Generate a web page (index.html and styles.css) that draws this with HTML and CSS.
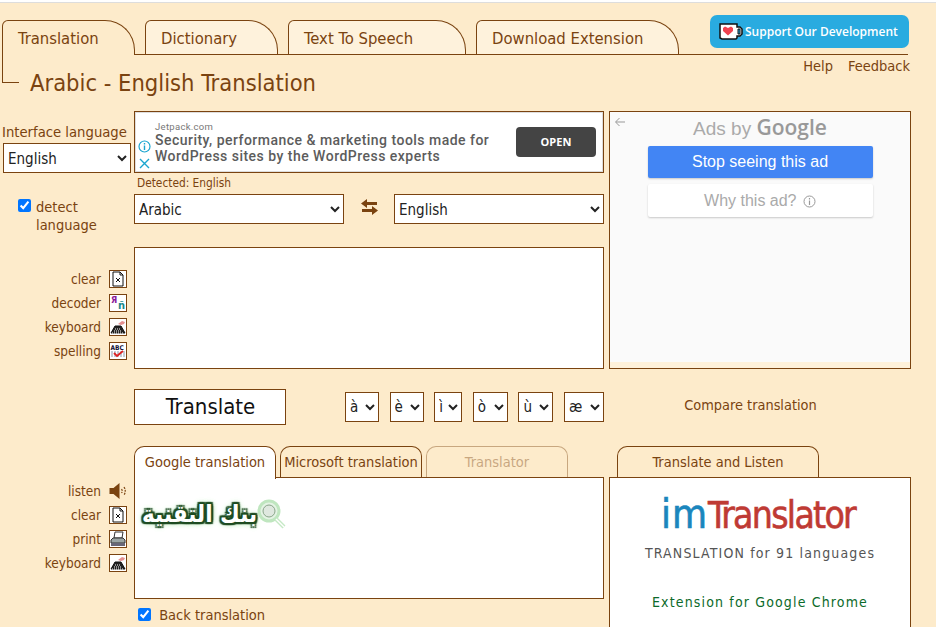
FILE: index.html
```html
<!DOCTYPE html>
<html lang="en">
<head>
    <meta charset="UTF-8">
    <title>Arabic - English Translation</title>
    <link rel="stylesheet" href="styles.css">
</head>
<body>
    <div class="header">
        <div class="tabs">
            <div class="tab tab-main">Translation</div>
            <div class="tab tab-dict">Dictionary</div>
            <div class="tab tab-tts">Text To Speech</div>
            <div class="tab tab-ext">Download Extension</div>
            <a class="support">
                <svg width="24" height="17" viewBox="0 0 24 17">
                    <path d="M1 1h17v3h3l2 2v5l-2 2h-3v2l-1 1H3l-2-1z" fill="#fff" stroke="#111" stroke-width="1.500"/>
                    <path d="M4 5l2-1.500 3 1.500 3-1.500 2 1.500v3l-5 4.500-5-4.500z" fill="#f0424f"/>
                    <path d="M19 6h2v5h-2z" fill="#29abe0" stroke="#111"/>
                </svg>
                Support Our Development
            </a>
        </div>
        <div class="subhead">
            <h1>Arabic - English Translation</h1>
            <div class="links"><span>Help</span><span>Feedback</span></div>
        </div>
    </div>

    <div class="row row-input">
        <div class="side">
            <label class="iface-label">Interface language</label>
            <select class="iface-select"><option>English</option></select>
            <div class="detect">
                <input type="checkbox" checked>
                <span>detect<br>language</span>
            </div>
            <ul class="tools tools-input">
                <li>clear
                    <svg class="ico" viewBox="0 0 16 16"><path d="M3 1h7l3 3v11H3z" fill="#fff" stroke="#111"/><path d="M10 1v3h3" fill="none" stroke="#111"/><path d="M6 7l4 4M10 7l-4 4" stroke="#111"/></svg>
                </li>
                <li>decoder
                    <svg class="ico" viewBox="0 0 16 16"><text x="1" y="8" class="ico-a">Я</text><text x="8" y="14" class="ico-b">ñ</text></svg>
                </li>
                <li>keyboard
                    <svg class="ico" viewBox="0 0 16 16"><path d="M1 14l4-7h6l4 7z" fill="#222" stroke="#111"/><path d="M4 12h8M5 10h6M2 14h12" stroke="#fff" stroke-dasharray="1 1"/><path d="M8 5l4-3 3 1-1 2-3 1z" fill="#e58f8f"/></svg>
                </li>
                <li>spelling
                    <svg class="ico" viewBox="0 0 16 16"><text x="0.500" y="7" class="ico-abc">ABC</text><path d="M1 9h14M1 11h14M1 13h14" stroke="#89a" stroke-dasharray="2 1"/><path d="M4 10l3 3 6-5" fill="none" stroke="#d22" stroke-width="1.800"/></svg>
                </li>
            </ul>
        </div>

        <div class="middle">
            <div class="jetpack">
                <div class="jetpack-marks">
                    <svg width="13" height="13" viewBox="0 0 13 13"><circle cx="6.500" cy="6.500" r="5.500" fill="none" stroke="#1aa5cf" stroke-width="1.200"/><path d="M6.500 3v1.500M6.500 5.500V10" stroke="#1aa5cf" stroke-width="1.400"/></svg>
                    <svg width="13" height="13" viewBox="0 0 13 13"><path d="M2 2l9 9M11 2l-9 9" stroke="#1aa5cf" stroke-width="1.400"/></svg>
                </div>
                <div class="jetpack-copy">
                    <small>Jetpack.com</small>
                    <p>Security, performance &amp; marketing tools made for WordPress sites by the WordPress experts</p>
                </div>
                <span class="jetpack-open">OPEN</span>
            </div>
            <div class="detected">Detected: English</div>
            <div class="lang-pair">
                <select class="lang"><option>Arabic</option></select>
                <svg class="swap" width="17" height="16" viewBox="0 0 17 16"><path d="M6 0L0 4.500 6 9V6h10V3H6zM11 7l6 4.500-6 4.500v-3H1v-3h10z" fill="#7a4310"/></svg>
                <select class="lang"><option>English</option></select>
            </div>
            <textarea class="source"></textarea>
        </div>

        <div class="adchoice">
            <div class="adchoice-body">
                <svg class="adback" width="12" height="10" viewBox="0 0 12 10"><path d="M11 5H2M5.500 1L1.500 5l4 4" fill="none" stroke="#999" stroke-width="1"/></svg>
                <div class="adsby">Ads by <b>Google</b></div>
                <div class="ad-btn ad-stop">Stop seeing this ad</div>
                <div class="ad-btn ad-why">Why this ad?
                    <svg width="13" height="13" viewBox="0 0 13 13"><circle cx="6.500" cy="6.500" r="5.500" fill="none" stroke="#999"/><path d="M6.500 3v1.500M6.500 5.500V10" stroke="#999" stroke-width="1.200"/></svg>
                </div>
            </div>
        </div>
    </div>

    <div class="row row-actions">
        <div class="side"></div>
        <div class="actions-mid">
            <button class="translate">Translate</button>
            <div class="chars">
                <select class="char"><option>à</option></select>
                <select class="char"><option>è</option></select>
                <select class="char char-i"><option>ì</option></select>
                <select class="char char-wide"><option>ò</option></select>
                <select class="char char-wide"><option>ù</option></select>
                <select class="char char-ae"><option>æ</option></select>
            </div>
        </div>
        <div class="compare">Compare translation</div>
    </div>

    <div class="row row-output">
        <div class="side">
            <ul class="tools tools-output">
                <li>listen
                    <svg class="ico-plain" viewBox="0 0 17 18"><path d="M0 6h4l6-5v16l-6-5H0z" fill="#7a4310"/><path d="M12 7q1.500 2 0 4M14.500 5q2.500 4 0 8" fill="none" stroke="#7a4310" stroke-width="1.200" stroke-dasharray="2 1"/></svg>
                </li>
                <li>clear
                    <svg class="ico" viewBox="0 0 16 16"><path d="M3 1h7l3 3v11H3z" fill="#fff" stroke="#111"/><path d="M10 1v3h3" fill="none" stroke="#111"/><path d="M6 7l4 4M10 7l-4 4" stroke="#111"/></svg>
                </li>
                <li>print
                    <svg class="ico" viewBox="0 0 16 16"><path d="M5 1h8l-1 6H4z" fill="#fff" stroke="#333"/><path d="M1 9l2-2h10l2 2v3H1z" fill="#9aa5a5" stroke="#333"/><path d="M1 12h14v3H1z" fill="#667"/></svg>
                </li>
                <li>keyboard
                    <svg class="ico" viewBox="0 0 16 16"><path d="M1 14l4-7h6l4 7z" fill="#222" stroke="#111"/><path d="M4 12h8M5 10h6M2 14h12" stroke="#fff" stroke-dasharray="1 1"/><path d="M8 5l4-3 3 1-1 2-3 1z" fill="#e58f8f"/></svg>
                </li>
            </ul>
        </div>
        <div class="middle">
            <div class="subtabs">
                <div class="subtab subtab-on">Google translation</div>
                <div class="subtab">Microsoft translation</div>
                <div class="subtab subtab-off">Translator</div>
            </div>
            <div class="output">
                <div class="brand">
                    <span class="brand-text" dir="rtl" lang="ar">بنك التقنية</span>
                    <svg width="30" height="32" viewBox="0 0 30 32"><circle cx="12" cy="13" r="10" fill="#e4f3e4" stroke="#bfe6bf" stroke-width="3"/><circle cx="12" cy="13" r="6" fill="#dfe8df" stroke="#8aa58a"/><path d="M19 21l8 8" stroke="#c5e8c5" stroke-width="4"/><path d="M19 21l8 8" stroke="#fff" stroke-width="1.500"/></svg>
                </div>
            </div>
            <label class="back"><input type="checkbox" checked> Back translation</label>
        </div>
        <div class="promo-col">
            <div class="subtabs subtabs-promo">
                <div class="subtab subtab-listen">Translate and Listen</div>
            </div>
            <div class="promo">
                <div class="logo"><span class="logo-im">im</span><span class="logo-tr">Translator</span></div>
                <div class="promo-line">TRANSLATION for 91 languages</div>
                <div class="promo-ext">Extension for Google Chrome</div>
            </div>
        </div>
    </div>
</body>
</html>
```

FILE: styles.css
```css
html {
    background: #fff;
}

body {
    font-family: "DejaVu Sans Condensed", "DejaVu Sans", sans-serif;
    font-size: 14px;
    background-color: #fdebcb;
    color: #7a4310;
    margin: 2px 0 0;
    padding: 0;
    height: 625px;
    overflow: hidden;
    border-top: 1px solid #ddd;
    box-sizing: border-box;
}

select {
    font-family: "DejaVu Sans Condensed", "DejaVu Sans", sans-serif;
    font-size: 15px;
    color: #222;
    background: #fff;
    border: 1px solid #7a4310;
    border-radius: 0;
    box-sizing: border-box;
}

/* top tabs */
.header {
    padding-left: 2px;
}

.tabs {
    display: flex;
    align-items: flex-end;
    height: 51px;
    width: 906px;
    border-bottom: 1px solid #7a4310;
    position: relative;
}

.tab {
    height: 34px;
    box-sizing: border-box;
    border: 1px solid #7a4310;
    border-bottom: none;
    border-radius: 6px 30px 0 0;
    background: #fef2dc;
    font-size: 16.500px;
    line-height: 36px;
    padding-left: 15px;
    margin-right: 10px;
}

.tab-main {
    width: 133px;
    height: 35px;
    background: #fdebcb;
    margin-bottom: -1px;
}

.tab-dict {
    width: 133px;
}

.tab-tts {
    width: 178px;
}

.tab-ext {
    width: 203px;
}

.support {
    position: absolute;
    left: 708px;
    top: 12px;
    width: 199px;
    height: 33px;
    box-sizing: border-box;
    background: #29abe0;
    border-radius: 7px;
    color: #fff;
    font-family: "Open Sans", sans-serif;
    font-weight: 600;
    font-size: 12px;
    display: flex;
    align-items: center;
    padding-left: 9px;
    gap: 2px;
    white-space: nowrap;
}

.subhead {
    display: flex;
    justify-content: space-between;
    width: 908px;
    height: 56px;
}

h1 {
    margin: 0;
    font-weight: normal;
    font-size: 23.500px;
    height: 28px;
    line-height: 28px;
    margin-top: 14px;
    padding-left: 28px;
    position: relative;
}

/* tail of the main tab outline */
h1::before {
    content: "";
    position: absolute;
    left: 0;
    top: -14px;
    width: 16px;
    height: 27px;
    border-left: 1px solid #7a4310;
    border-bottom: 1px solid #7a4310;
}

.links {
    display: flex;
    gap: 15px;
    padding-top: 3px;
    font-size: 14.500px;
}

/* rows */
.row {
    display: flex;
}

.side {
    width: 134px;
    flex: none;
}

.middle {
    width: 470px;
    flex: none;
}

.row-input {
    height: 258px;
}

.iface-label {
    display: block;
    padding: 12px 0 0 2px;
    height: 20px;
    font-size: 14.700px;
    white-space: nowrap;
}

.iface-select {
    display: block;
    width: 128px;
    height: 30px;
    margin-left: 3px;
    padding: 2px 0 0;
}

.detect {
    display: flex;
    margin: 18px 0 0 18px;
    font-size: 14.500px;
    line-height: 18px;
    height: 44px;
}

.detect input {
    margin: 8px 5px 0 0;
    width: 13px;
    height: 13px;
}

.detect span {
    padding-top: 7px;
}

.tools {
    list-style: none;
    margin: 0;
    padding: 0 7px 0 0;
    font-size: 13.500px;
}

.tools li {
    display: flex;
    align-items: center;
    justify-content: flex-end;
    gap: 8px;
    height: 24px;
}

.tools-input {
    margin-top: 32px;
}

.ico {
    width: 16px;
    height: 16px;
    background: #fff;
    border: 1px solid #7a4310;
}

.ico-plain {
    width: 18px;
    height: 18px;
}

.ico-a {
    font-size: 9px;
    font-weight: bold;
    fill: #8a1a9a;
}

.ico-b {
    font-size: 11px;
    font-weight: bold;
    fill: #1a8a8a;
}

.ico-abc {
    font-size: 6.500px;
    font-weight: bold;
    fill: #113;
}

.jetpack {
    height: 62px;
    box-sizing: border-box;
    border: 1px solid #7a4310;
    background: #fff;
    box-shadow: inset 0 0 0 1px #ddd;
    display: flex;
    align-items: center;
    color: #5c5c5c;
    position: relative;
}

.jetpack-marks {
    display: flex;
    flex-direction: column;
    gap: 4px;
    margin: 25px 0 0 3px;
    width: 17px;
    flex: none;
}

.jetpack-copy {
    width: 342px;
    flex: none;
}

.jetpack-copy small {
    display: block;
    font-family: Roboto, sans-serif;
    font-size: 9.500px;
    letter-spacing: 0.3px;
    color: #777;
    line-height: 11px;
}

.jetpack-copy p {
    margin: 0;
    font-family: Roboto, sans-serif;
    font-size: 14px;
    font-weight: 500;
    letter-spacing: 0.48px;
    line-height: 16px;
}

.jetpack-open {
    margin-left: 19px;
    width: 80px;
    height: 30px;
    background: #444;
    border-radius: 4px;
    color: #fff;
    font: bold 11px/30px "Open Sans", sans-serif;
    text-align: center;
}

.detected {
    font-size: 11.800px;
    height: 21px;
    line-height: 21px;
    padding-left: 3px;
}

.lang-pair {
    display: flex;
    align-items: center;
    justify-content: space-between;
    height: 30px;
}

.lang {
    width: 210px;
    height: 30px;
    padding: 2px 0 0;
}

.swap {
    margin-top: -4px;
}

.source {
    display: block;
    width: 100%;
    height: 122px;
    margin: 23px 0 0;
    padding: 2px;
    border: 1px solid #7a4310;
    box-sizing: border-box;
    background: #fff;
    resize: none;
}

/* ad panel */
.adchoice {
    margin-left: 5px;
    width: 302px;
    height: 258px;
    box-sizing: border-box;
    border: 1px solid #7a4310;
    background: #fef1da;
    padding-bottom: 6px;
}

.adchoice-body {
    height: 100%;
    background: #fafafa;
    position: relative;
    display: flex;
    flex-direction: column;
    align-items: center;
}

.adback {
    position: absolute;
    left: 4px;
    top: 5px;
}

.adsby {
    font-family: "Liberation Sans", sans-serif;
    font-size: 19px;
    color: #aaa;
    height: 34px;
    line-height: 31px;
}

.adsby b {
    font-family: "Open Sans", sans-serif;
    font-size: 21px;
    font-weight: 600;
    color: #999;
}

.ad-btn {
    width: 225px;
    box-sizing: border-box;
    border-radius: 2px;
    font-family: "Liberation Sans", sans-serif;
    font-size: 16px;
    text-align: center;
    box-shadow: 0 1px 2px rgba(0, 0, 0, 0.2);
}

.ad-stop {
    height: 32px;
    line-height: 32px;
    background: #4285f4;
    color: #fff;
}

.ad-why {
    height: 33px;
    line-height: 33px;
    margin-top: 6px;
    background: #fff;
    color: #aaa;
}

.ad-why svg {
    vertical-align: -2px;
    margin-left: 2px;
}

/* translate row */
.row-actions {
    height: 36px;
    margin-top: 20px;
}

.actions-mid {
    width: 470px;
    flex: none;
    display: flex;
    align-items: center;
    justify-content: space-between;
}

.translate {
    width: 152px;
    height: 36px;
    background: #fff;
    border: 1px solid #7a4310;
    color: #111;
    font-family: "DejaVu Sans Condensed", "DejaVu Sans", sans-serif;
    font-size: 22px;
    padding: 0 0 2px 1px;
}

.chars {
    display: flex;
    justify-content: space-between;
    width: 259px;
}

.char {
    width: 34px;
    height: 30px;
    padding: 0;
}

.char-i {
    width: 28px;
}

.char-wide {
    width: 35px;
}

.char-ae {
    width: 40px;
}

.compare {
    width: 283px;
    margin-left: 5px;
    text-align: center;
    line-height: 32px;
    font-size: 14.400px;
}

/* output row */
.row-output {
    margin-top: 21px;
}

.tools-output {
    margin-top: 33px;
}

.subtabs {
    display: flex;
    gap: 4px;
    height: 31px;
    position: relative;
}

.subtab {
    width: 142px;
    height: 32px;
    box-sizing: border-box;
    border: 1px solid #7a4310;
    border-bottom: none;
    border-radius: 10px 10px 0 0;
    text-align: center;
    line-height: 31px;
    font-size: 14.500px;
    white-space: nowrap;
}

.subtab-on {
    background: #fff;
    height: 33px;
    position: relative;
    z-index: 1;
}

.subtab-off {
    opacity: 0.4;
}

.subtab-listen {
    width: 202px;
    margin-left: 8px;
}

.output {
    height: 122px;
    box-sizing: border-box;
    border: 1px solid #7a4310;
    background: #fff;
    padding: 20px 0 0 7px;
}

.brand {
    display: flex;
    align-items: center;
}

.brand-text {
    font-family: "DejaVu Sans Condensed", "DejaVu Sans", sans-serif;
    font-weight: bold;
    font-size: 24px;
    line-height: 32px;
    color: #fff;
    white-space: nowrap;
    text-shadow: 2px 0 1px #1f4d23, -2px 0 1px #1f4d23, 0 2px 1px #1f4d23, 0 -2px 1px #1f4d23,
        2px 2px 1px #1f4d23, -2px 2px 1px #1f4d23, 2px -2px 1px #1f4d23, -2px -2px 1px #1f4d23,
        0 0 6px #a9e0a9, 0 0 6px #a9e0a9;
}

.back {
    display: block;
    margin: 8px 0 0 4px;
    font-size: 14.500px;
    white-space: nowrap;
}

.back input {
    margin: 0 4px 0 0;
    vertical-align: -1px;
}

.promo-col {
    margin-left: 5px;
    width: 302px;
}

.promo {
    height: 150px;
    box-sizing: border-box;
    border: 1px solid #7a4310;
    border-bottom: none;
    background: #fff;
    text-align: center;
    letter-spacing: 1.150px;
    font-size: 14px;
}

.logo {
    height: 54px;
    line-height: 72px;
    font-family: "DejaVu Sans Condensed", "DejaVu Sans", sans-serif;
    font-size: 37px;
    letter-spacing: -1.700px;
    -webkit-text-stroke: 0.6px;
    padding-right: 4px;
}

.logo-im {
    color: #1a86bd;
    font-size: 40px;
    letter-spacing: 1px;
}

.logo-tr {
    color: #bf3a34;
}

.promo-line {
    color: #555;
    padding-top: 13px;
    line-height: 17px;
}

.promo-ext {
    color: #0c6a2a;
    padding-top: 32px;
    line-height: 17px;
}
```
